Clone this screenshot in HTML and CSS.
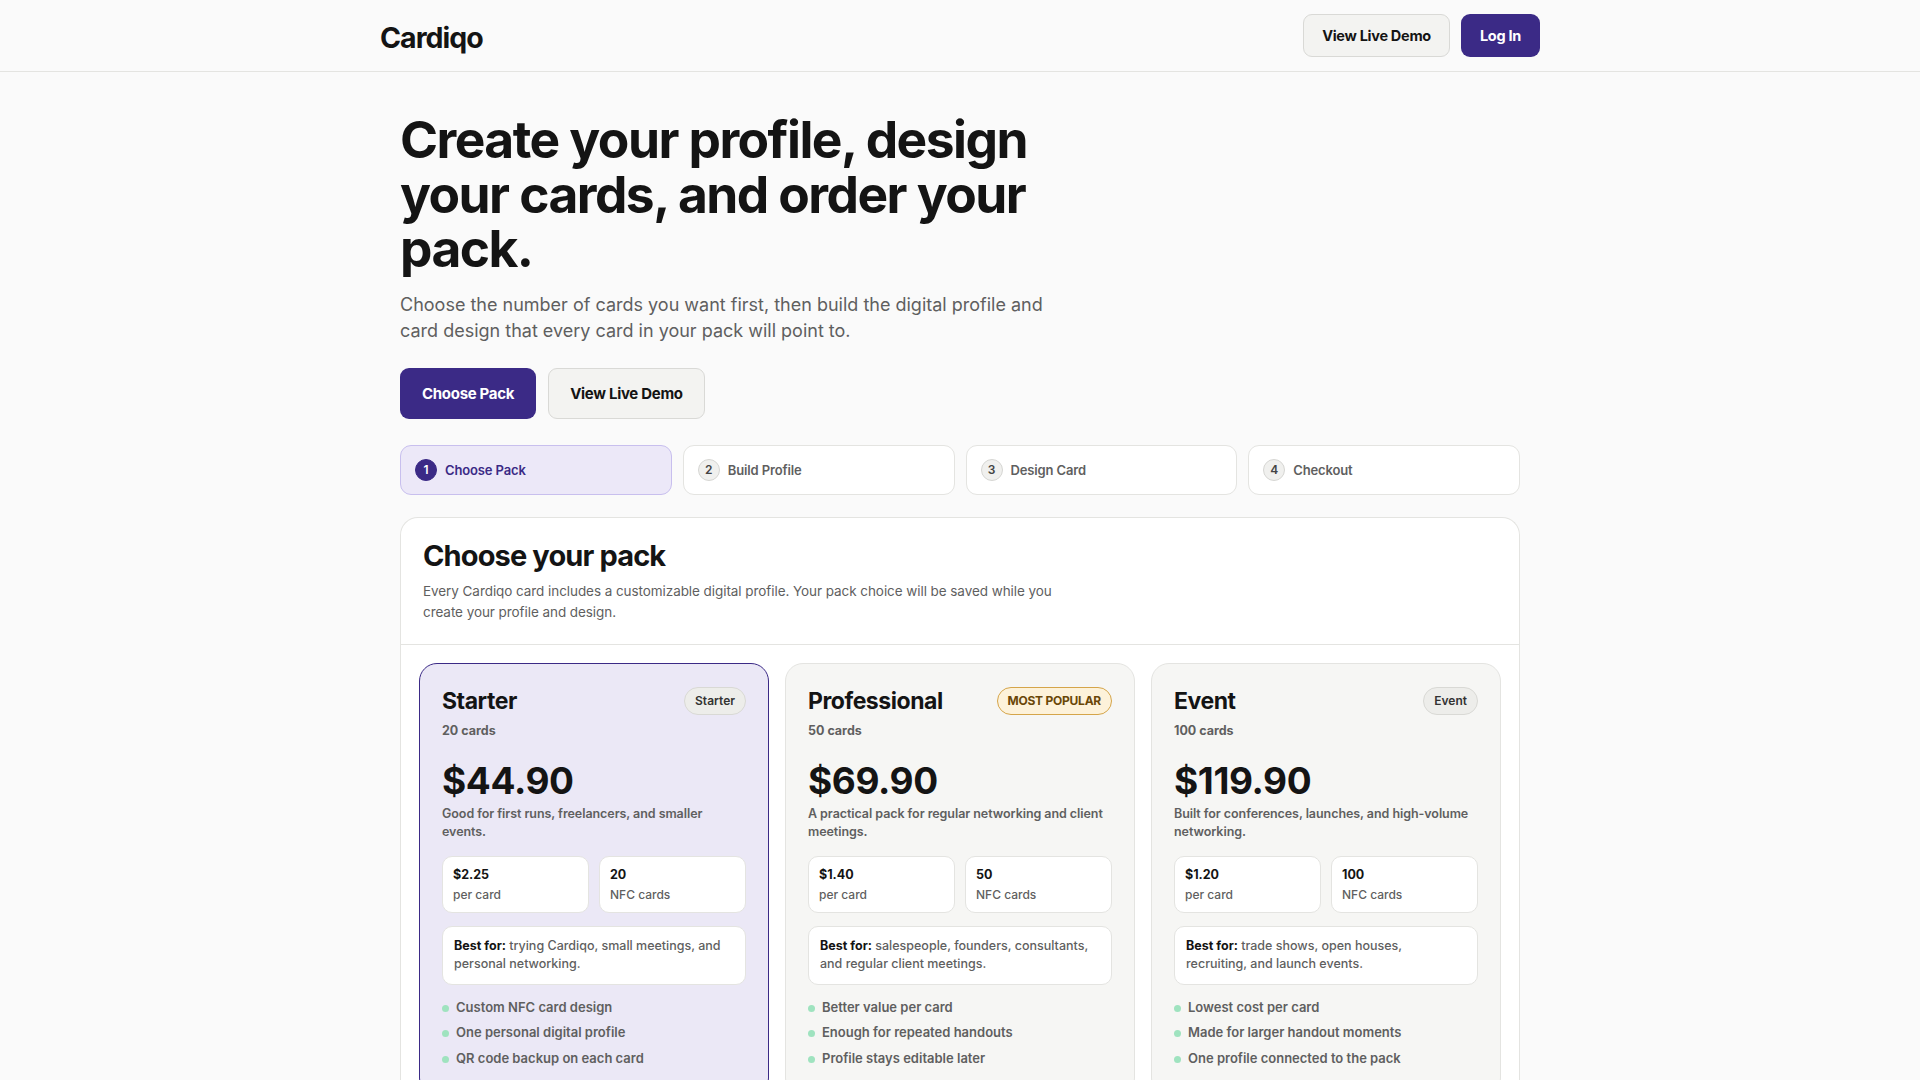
FILE: index.html
```
<!DOCTYPE html>
<html lang="en">
<head>
    <meta charset="UTF-8">
    <meta name="viewport" content="width=device-width, initial-scale=1.0">
    <title>Cardiqo - Create your pack</title>
    <link rel="stylesheet" href="styles.css">
</head>
<body>
    <header class="topbar">
        <div class="topbar-inner">
            <a class="logo" href="#">Cardiqo</a>
            <nav class="topbar-actions">
                <a class="btn btn-light btn-sm" href="#">View Live Demo</a>
                <a class="btn btn-primary btn-sm" href="#">Log In</a>
            </nav>
        </div>
    </header>

    <main class="page">
        <section class="hero">
            <h1>Create your profile, design your cards, and order your pack.</h1>
            <p>Choose the number of cards you want first, then build the digital profile and card design that every card in your pack will point to.</p>
            <div class="hero-actions">
                <a class="btn btn-primary" href="#">Choose Pack</a>
                <a class="btn btn-light" href="#">View Live Demo</a>
            </div>
        </section>

        <ol class="steps">
            <li class="step active"><span class="step-num">1</span>Choose Pack</li>
            <li class="step"><span class="step-num">2</span>Build Profile</li>
            <li class="step"><span class="step-num">3</span>Design Card</li>
            <li class="step"><span class="step-num">4</span>Checkout</li>
        </ol>

        <section class="panel">
            <div class="panel-head">
                <h2>Choose your pack</h2>
                <p>Every Cardiqo card includes a customizable digital profile. Your pack choice will be saved while you create your profile and design.</p>
            </div>

            <div class="packs">
                <div class="pack selected">
                    <div class="pack-top">
                        <h3>Starter</h3>
                        <span class="tag">Starter</span>
                    </div>
                    <div class="pack-count">20 cards</div>
                    <div class="pack-price">$44.90</div>
                    <p class="pack-desc">Good for first runs, freelancers, and smaller events.</p>
                    <div class="stats">
                        <div class="stat"><strong>$2.25</strong><span>per card</span></div>
                        <div class="stat"><strong>20</strong><span>NFC cards</span></div>
                    </div>
                    <p class="best"><b>Best for:</b> trying Cardiqo, small meetings, and personal networking.</p>
                    <ul class="features">
                        <li>Custom NFC card design</li>
                        <li>One personal digital profile</li>
                        <li>QR code backup on each card</li>
                    </ul>
                </div>

                <div class="pack">
                    <div class="pack-top">
                        <h3>Professional</h3>
                        <span class="tag tag-popular">MOST POPULAR</span>
                    </div>
                    <div class="pack-count">50 cards</div>
                    <div class="pack-price">$69.90</div>
                    <p class="pack-desc">A practical pack for regular networking and client meetings.</p>
                    <div class="stats">
                        <div class="stat"><strong>$1.40</strong><span>per card</span></div>
                        <div class="stat"><strong>50</strong><span>NFC cards</span></div>
                    </div>
                    <p class="best"><b>Best for:</b> salespeople, founders, consultants, and regular client meetings.</p>
                    <ul class="features">
                        <li>Better value per card</li>
                        <li>Enough for repeated handouts</li>
                        <li>Profile stays editable later</li>
                    </ul>
                </div>

                <div class="pack">
                    <div class="pack-top">
                        <h3>Event</h3>
                        <span class="tag">Event</span>
                    </div>
                    <div class="pack-count">100 cards</div>
                    <div class="pack-price">$119.90</div>
                    <p class="pack-desc">Built for conferences, launches, and high-volume networking.</p>
                    <div class="stats">
                        <div class="stat"><strong>$1.20</strong><span>per card</span></div>
                        <div class="stat"><strong>100</strong><span>NFC cards</span></div>
                    </div>
                    <p class="best"><b>Best for:</b> trade shows, open houses, recruiting, and launch events.</p>
                    <ul class="features">
                        <li>Lowest cost per card</li>
                        <li>Made for larger handout moments</li>
                        <li>One profile connected to the pack</li>
                    </ul>
                </div>
            </div>
        </section>
    </main>
</body>
</html>
```

FILE: styles.css
```
:root {
    --brand: #3b2a86;
    --ink: #141414;
    --muted: #5f5f5f;
    --line: #e4e4e1;
    --page: #fafafa;
    --soft: #f6f6f4;
}

* {
    box-sizing: border-box;
}

body {
    margin: 0;
    background: var(--page);
    color: var(--ink);
    font-family: Inter, 'Noto Sans', sans-serif;
}

a {
    text-decoration: none;
    color: inherit;
}

/* top bar */
.topbar {
    border-bottom: 1px solid var(--line);
    background: var(--page);
}

.topbar-inner {
    max-width: 1160px;
    margin: 0 auto;
    height: 71px;
    display: flex;
    align-items: center;
    justify-content: space-between;
}

.logo {
    font-size: 28.5px;
    font-weight: 700;
    letter-spacing: -0.035em;
    margin-top: 4px;
}

.topbar-actions {
    display: flex;
    gap: 11px;
}

.btn {
    display: inline-flex;
    align-items: center;
    justify-content: center;
    height: 51px;
    padding: 0 21px;
    border-radius: 9px;
    font-size: 15px;
    font-weight: 700;
    letter-spacing: -0.02em;
    border: 1px solid transparent;
}

.btn-sm {
    height: 43px;
    padding: 0 18px;
    font-size: 14.5px;
}

.btn-primary {
    background: var(--brand);
    color: #fff;
}

.btn-light {
    background: #f3f3f1;
    border-color: #d9d9d6;
    color: var(--ink);
}

/* hero */
.page {
    max-width: 1120px;
    margin: 0 auto;
}

.hero {
    padding-top: 40px;
}

.hero h1 {
    margin: 0;
    max-width: 660px;
    font-size: 51.5px;
    line-height: 54.5px;
    font-weight: 700;
    letter-spacing: -0.03em;
}

.hero p {
    margin: 16px 0 0;
    max-width: 660px;
    font-size: 18px;
    line-height: 26px;
    color: var(--muted);
}

.hero-actions {
    display: flex;
    gap: 12px;
    margin-top: 24px;
}

/* steps */
.steps {
    list-style: none;
    margin: 26px 0 0;
    padding: 0;
    display: grid;
    grid-template-columns: repeat(4, 1fr);
    gap: 11px;
}

.step {
    height: 50px;
    display: flex;
    align-items: center;
    gap: 8px;
    padding: 0 14px;
    background: #fff;
    border: 1px solid var(--line);
    border-radius: 11px;
    font-size: 13px;
    font-weight: 600;
    color: var(--muted);
    letter-spacing: -0.01em;
}

.step-num {
    width: 22px;
    height: 22px;
    border-radius: 50%;
    display: flex;
    align-items: center;
    justify-content: center;
    background: #f0f0ee;
    border: 1px solid #d6d6d3;
    color: #444;
    font-size: 12px;
}

.step.active {
    background: #ece8f8;
    border-color: #c8bfee;
    color: var(--brand);
}

.step.active .step-num {
    background: var(--brand);
    border-color: var(--brand);
    color: #fff;
}

/* pack panel */
.panel {
    margin-top: 22px;
    background: #fff;
    border: 1px solid var(--line);
    border-radius: 18px 18px 0 0;
    border-bottom: none;
}

.panel-head {
    padding: 18px 22px 21px;
    border-bottom: 1px solid var(--line);
}

.panel-head h2 {
    margin: 0;
    font-size: 29px;
    font-weight: 700;
    letter-spacing: -0.03em;
    line-height: 40px;
}

.panel-head p {
    margin: 5px 0 0;
    max-width: 640px;
    font-size: 13.5px;
    line-height: 21px;
    color: var(--muted);
    letter-spacing: -0.005em;
}

.packs {
    display: grid;
    grid-template-columns: repeat(3, 1fr);
    gap: 16px;
    padding: 18px 18px 0;
}

.pack {
    background: var(--soft);
    border: 1px solid var(--line);
    border-radius: 18px;
    padding: 23px 22px 24px;
}

.pack.selected {
    background: #ebe8f6;
    border: 1.5px solid var(--brand);
}

.pack-top {
    display: flex;
    justify-content: space-between;
    align-items: center;
}

.pack-top h3 {
    margin: 0;
    font-size: 23px;
    font-weight: 700;
    letter-spacing: -0.02em;
}

.tag {
    height: 28px;
    display: inline-flex;
    align-items: center;
    padding: 0 10px;
    border-radius: 14px;
    background: #ededea;
    border: 1px solid #d9d9d5;
    font-size: 12px;
    font-weight: 600;
    color: #333;
}

.tag-popular {
    background: #fdf2da;
    border-color: #d5a54a;
    color: #6a4708;
    font-weight: 700;
    letter-spacing: -0.02em;
}

.pack-count {
    margin-top: 8px;
    font-size: 12.5px;
    font-weight: 700;
    color: var(--muted);
}

.pack-price {
    margin-top: 22px;
    font-size: 37px;
    line-height: 42px;
    font-weight: 700;
    letter-spacing: -0.01em;
}

.pack-desc {
    margin: 3px 0 0;
    font-size: 12.5px;
    line-height: 18.5px;
    font-weight: 600;
    color: var(--muted);
    letter-spacing: -0.005em;
}

.stats {
    display: grid;
    grid-template-columns: 1fr 1fr;
    gap: 10px;
    margin-top: 14px;
}

.stat {
    background: #fff;
    border: 1px solid var(--line);
    border-radius: 10px;
    padding: 9px 10px 8px;
    display: flex;
    flex-direction: column;
    gap: 2px;
    font-size: 12.5px;
    line-height: 18px;
}

.stat strong {
    font-weight: 700;
}

.stat span {
    color: var(--muted);
    font-weight: 500;
    font-size: 12px;
}

.best {
    margin: 13px 0 0;
    background: #fff;
    border: 1px solid var(--line);
    border-radius: 10px;
    padding: 10px 11px 10px;
    font-size: 12.5px;
    line-height: 18.5px;
    color: var(--muted);
    font-weight: 500;
}

.best b {
    color: var(--ink);
    font-weight: 700;
}

.features {
    list-style: none;
    margin: 10px 0 0;
    padding: 0;
}

.features li {
    position: relative;
    padding-left: 14px;
    font-size: 13px;
    line-height: 25.5px;
    font-weight: 600;
    color: var(--muted);
}

.features li::before {
    content: "";
    position: absolute;
    left: 0;
    top: 10px;
    width: 7px;
    height: 7px;
    border-radius: 50%;
    background: #9fe3bf;
}
```
